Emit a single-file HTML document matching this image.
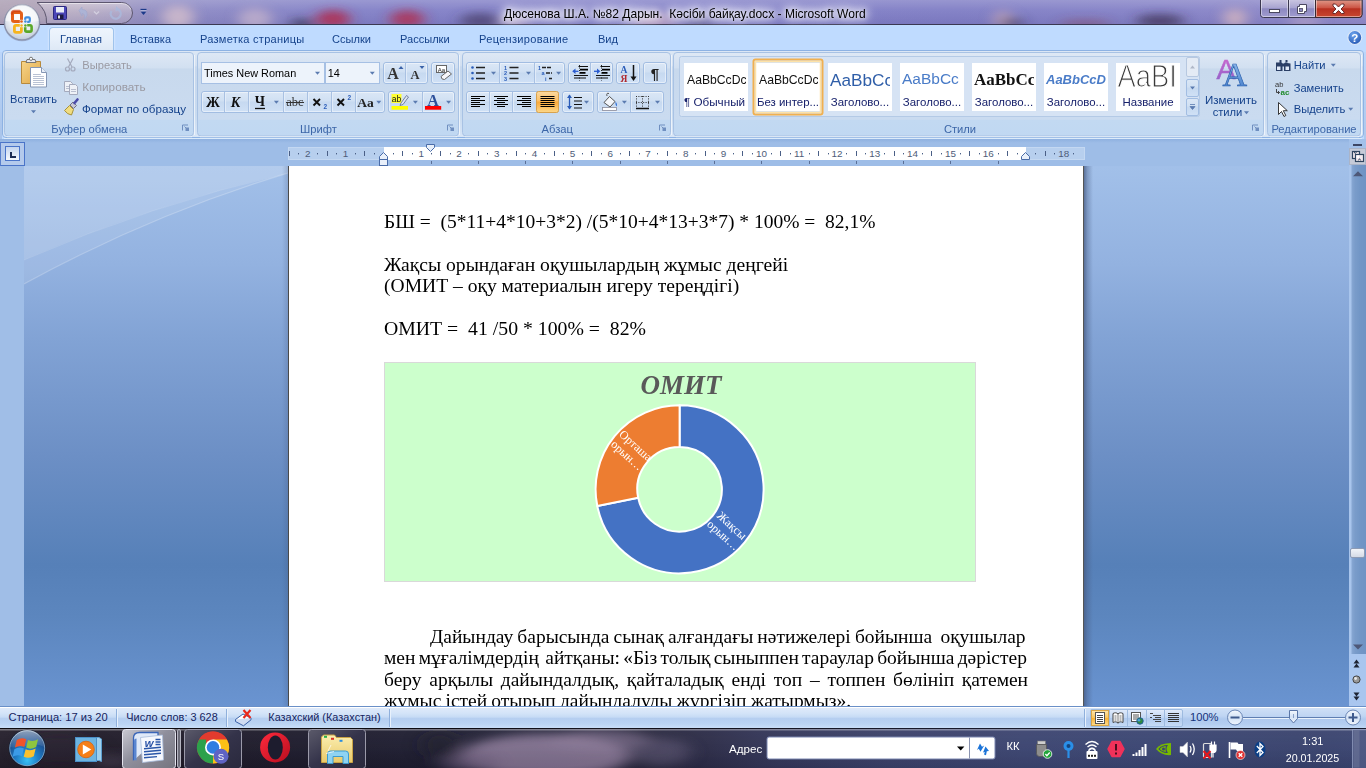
<!DOCTYPE html>
<html><head><meta charset="utf-8">
<style>
*{box-sizing:border-box;margin:0;padding:0}
html,body{width:1366px;height:768px;overflow:hidden;background:#6a93cf;font-family:"Liberation Sans",sans-serif;font-size:12px;color:#15428b}
.abs{position:absolute}
#root{position:absolute;left:0;top:0;width:1366px;height:768px;overflow:hidden}
/* title bar */
#title{left:0;top:0;width:1366px;height:25px;background:linear-gradient(90deg,#aaa0b8 0,#a098bc 6%,#8c89c4 13%,#817fc6 25%,#7f7dc6 50%,#7e7cc4 70%,#8380c6 85%,#8f89c8 100%)}
#title .shade{left:0;top:0;width:1366px;height:25px;background:linear-gradient(180deg,rgba(255,255,255,.2) 0,rgba(255,255,255,.06) 40%,rgba(40,30,80,.06) 100%)}
#titleline{left:0;top:24px;width:1366px;height:2px;background:linear-gradient(180deg,#3a3852 0,#3a3852 50%,#6e7298 50%,#6e7298 100%)}
#titletext{left:504px;top:7px;width:362px;text-align:left;color:#000;font-size:12.06px;line-height:14px;white-space:pre;text-shadow:0 0 5px #fff,0 0 8px #fff,0 0 11px #fff,0 0 14px rgba(255,255,255,.95),0 0 18px rgba(255,255,255,.8)}
/* tab row */
#tabrow{left:0;top:25px;width:1366px;height:115px;background:#bfdbff}
.tab{position:absolute;top:7px;font-size:11.05px;line-height:14px;color:#15428b;white-space:nowrap}
#tabactive{left:48.5px;top:27px;width:65px;height:24px;border:1px solid #9fc3ec;border-bottom:none;border-radius:4px 4px 0 0;background:linear-gradient(180deg,#eef5fd 0,#e6effa 55%,#dde8f5 100%);box-shadow:0 0 2px rgba(255,255,255,.9)}
/* ribbon */
#ribbon{left:2px;top:50px;width:1362px;height:89px;border:1px solid #8db2e3;border-radius:4px;background:linear-gradient(180deg,#dde8f5 0,#d3e0f1 18%,#c7d8ed 22%,#c9dbef 70%,#d5e4f5 100%)}
.grp{position:absolute;top:53px;height:84px;border:1px solid #a9c3e3;border-radius:4px;background:linear-gradient(180deg,#dfe9f5 0,#d5e2f2 19%,#c8d9ed 21%,#c9daee 78%,#c1d8f1 81%,#c1d8f1 100%);box-shadow:1px 1px 0 rgba(255,255,255,.7)}
.grplabel{position:absolute;left:0;right:0;bottom:1px;height:15px;text-align:center;color:#3e6aaa;font-size:12px;line-height:15px}
.t{position:absolute;white-space:nowrap}
</style></head><body><div id="root">

<!-- TITLE BAR -->
<div id="title" class="abs"><div class="shade abs"></div></div>
<svg class="abs" style="left:0;top:0" width="1366" height="25" viewBox="0 0 1366 25">
<defs><filter id="bl" x="-50%" y="-50%" width="200%" height="200%"><feGaussianBlur stdDeviation="7 4"/></filter></defs>
<g filter="url(#bl)">
<ellipse cx="178" cy="17" rx="16" ry="12" fill="#d0bccb" opacity=".85"/>
<ellipse cx="255" cy="19" rx="17" ry="11" fill="#c6b4cc" opacity=".75"/>
<ellipse cx="333" cy="19" rx="17" ry="9" fill="#b02c4c" opacity=".85"/>
<ellipse cx="407" cy="19" rx="17" ry="9" fill="#b02c4c" opacity=".8"/>
<ellipse cx="302" cy="24" rx="12" ry="5" fill="#2e2644" opacity=".7"/>
<ellipse cx="480" cy="21" rx="20" ry="8" fill="#463a64" opacity=".7"/>
<ellipse cx="515" cy="22" rx="14" ry="7" fill="#c8b0c8" opacity=".6"/>
<ellipse cx="655" cy="21" rx="22" ry="8" fill="#c9a8c0" opacity=".7"/>
<ellipse cx="700" cy="23" rx="14" ry="5" fill="#4a3f68" opacity=".5"/>
<ellipse cx="1003" cy="20" rx="10" ry="10" fill="#c8a8b8" opacity=".7"/>
<ellipse cx="1012" cy="23" rx="12" ry="5" fill="#3a3050" opacity=".6"/>
<ellipse cx="1085" cy="24" rx="26" ry="4" fill="#8a4058" opacity=".5"/>
<ellipse cx="1160" cy="21" rx="24" ry="7" fill="#3a3050" opacity=".7"/>
<ellipse cx="1235" cy="18" rx="12" ry="10" fill="#d8b8c0" opacity=".75"/>
<ellipse cx="1305" cy="22" rx="16" ry="6" fill="#c8b0c8" opacity=".5"/>
<ellipse cx="40" cy="8" rx="60" ry="14" fill="#b8aab8" opacity=".55"/>
</g>
</svg>
<div id="titleline" class="abs"></div>
<div id="titletext" class="abs">Дюсенова Ш.А. №82 Дарын.  Кәсіби байқау.docx - Microsoft Word</div>

<!-- TAB ROW -->
<div id="tabrow" class="abs"></div>
<div id="tabactive" class="abs"></div>
<div class="tab" style="left:60px;top:32px">Главная</div>
<div class="tab" style="left:130px;top:32px">Вставка</div>
<div class="tab" style="left:200px;top:32px;letter-spacing:.25px">Разметка страницы</div>
<div class="tab" style="left:332px;top:32px">Ссылки</div>
<div class="tab" style="left:400px;top:32px">Рассылки</div>
<div class="tab" style="left:479px;top:32px;letter-spacing:.3px">Рецензирование</div>
<div class="tab" style="left:598px;top:32px">Вид</div>

<!-- QAT / OFFICE BUTTON / WINDOW CONTROLS -->
<svg class="abs" style="left:0;top:0" width="1366" height="50" viewBox="0 0 1366 50" font-family="Liberation Sans, sans-serif">
<defs>
<radialGradient id="ob" cx=".5" cy=".35" r=".7"><stop offset="0" stop-color="#ffffff"/><stop offset=".55" stop-color="#e9edf3"/><stop offset=".85" stop-color="#c9d2df"/><stop offset="1" stop-color="#aeb9ca"/></radialGradient>
<linearGradient id="qat" x1="0" y1="0" x2="0" y2="1"><stop offset="0" stop-color="#d8d0dc" stop-opacity=".75"/><stop offset=".5" stop-color="#c0b6cc" stop-opacity=".6"/><stop offset="1" stop-color="#b0a6c4" stop-opacity=".55"/></linearGradient>
<linearGradient id="wc" x1="0" y1="0" x2="0" y2="1"><stop offset="0" stop-color="#c8c4e0"/><stop offset=".45" stop-color="#a8a4d0"/><stop offset=".5" stop-color="#8c88c0"/><stop offset="1" stop-color="#a29ed0"/></linearGradient>
<linearGradient id="wx" x1="0" y1="0" x2="0" y2="1"><stop offset="0" stop-color="#e09888"/><stop offset=".45" stop-color="#cc5444"/><stop offset=".5" stop-color="#b83020"/><stop offset="1" stop-color="#c84830"/></linearGradient>
<radialGradient id="hp" cx=".4" cy=".3" r=".8"><stop offset="0" stop-color="#6fa6ee"/><stop offset="1" stop-color="#1c4fae"/></radialGradient>
</defs>
<path d="M37,2.500H121.500a11,10.500 0 0 1 0,21H46.500A24.500,24.500 0 0 0 37,2.500z" fill="url(#qat)" stroke="#5c566e" stroke-width="1"/>
<path d="M40,3.500H121.500a10,9.500 0 0 1 9.500,6" fill="none" stroke="#fff" stroke-opacity=".5"/>
<!-- save -->
<rect x="53.500" y="6.500" width="13" height="13" rx="1" fill="#4b46b8" stroke="#2c2880" stroke-width="1"/><rect x="56" y="7" width="8" height="5.500" fill="#e8ecf8"/><rect x="57" y="14.500" width="6.500" height="4.500" fill="#1c1a40"/><rect x="58" y="15.500" width="2" height="3" fill="#d8d8e8"/>
<!-- undo (disabled) -->
<path d="M79,10.500l3,-3.500v2.500q6,0 5,6q-0.500,2.500 -3,3.500q2,-5 -2,-5.500v2.500z" fill="#aab4d8" stroke="#9aa4cc" stroke-width=".6" opacity=".85"/>
<path d="M94,11.500l2.500,2.500l2.500,-2.500" fill="none" stroke="#d4d0e0" stroke-width="1.200"/>
<!-- redo (disabled) -->
<path d="M118.500,9.500a5,5 0 1 1 -7,1.500" fill="none" stroke="#aab8dc" stroke-width="2.200" opacity=".85"/><path d="M116,6l4,3.500l-4.500,2z" fill="#aab8dc" opacity=".85"/>
<!-- customize -->
<path d="M140.500,9.500h6" stroke="#1c3a8a" stroke-width="1.300"/><path d="M140.500,11.500h6l-3,3.500z" fill="#1c3a8a"/><path d="M140.500,10.800h6" stroke="#e8ecf8" stroke-width=".6"/>
<!-- office button -->
<circle cx="22" cy="23" r="18.300" fill="#6a6a88" opacity=".4"/>
<circle cx="22" cy="22.400" r="17.500" fill="url(#ob)" stroke="#8c93ab" stroke-width="1.200"/>
<path d="M5.500,21a16.500,16.500 0 0 1 33,0q-16.500,3.500 -33,0z" fill="#fff" opacity=".5"/>
<g fill="none" stroke-linejoin="round">
<rect x="12.500" y="12.500" width="9" height="9" rx="1.800" stroke="#e4601a" stroke-width="3"/>
<rect x="25.200" y="17.300" width="4.600" height="4.600" rx="1.200" stroke="#3f8de0" stroke-width="2.200"/>
<rect x="14.400" y="25.400" width="7" height="7" rx="1.600" stroke="#f6b41e" stroke-width="2.800"/>
<rect x="25.200" y="25.200" width="6.400" height="6.400" rx="1.600" stroke="#5aa828" stroke-width="2.600"/>
</g>
<path d="M12,13.500q0,-2.500 2.500,-2.500h5" fill="none" stroke="#d03c0c" stroke-width="2.500" stroke-linecap="round" opacity=".7"/>
<rect x="19.800" y="19.800" width="7.400" height="7.400" fill="#eef0f5"/>
<circle cx="21.500" cy="21.500" r="1.350" fill="#e4601a"/><circle cx="25.400" cy="21.500" r="1.250" fill="#3f8de0"/><circle cx="21.500" cy="25.400" r="1.250" fill="#f6b41e"/><circle cx="25.400" cy="25.400" r="1.250" fill="#5aa828"/>
<!-- window controls -->
<path d="M1260.500,0v14.500q0,3 3,3h95.500q3,0 3,-3V0" fill="url(#wc)" stroke="#3a3850" stroke-width="1"/>
<path d="M1315.500,0v17.500h43.500q3,0 3,-3V0z" fill="url(#wx)" stroke="#3a2830" stroke-width="1"/>
<path d="M1288.500,0v17.500" stroke="#3a3850" stroke-width="1"/>
<path d="M1261.500,0v14.500q0,2 2,2h24v-16.500M1289.500,0v16.500h25v-16.500M1316.500,0v16.500h42.500q2,0 2,-2V0" fill="none" stroke="#fff" stroke-opacity=".45"/>
<rect x="1269.500" y="9.500" width="10" height="3" fill="#fff" stroke="#4a4860" stroke-width="1"/>
<path d="M1299.500,4.500h7v7h-2v2h-7v-7h2z" fill="#fff" stroke="#4a4860" stroke-width="1"/><rect x="1299.500" y="8.500" width="3" height="3" fill="#8a86bc" stroke="#4a4860" stroke-width=".8"/>
<path d="M1333,4l2.500,0l3,3l3,-3l2.500,0l0,2l-3,3l3,3l0,1.500l-2.500,0l-3,-3l-3,3l-2.500,0l0,-1.500l3,-3l-3,-3z" fill="#fff" stroke="#5a2020" stroke-width=".9"/>
<!-- help -->
<circle cx="1354.800" cy="37.500" r="7" fill="url(#hp)" stroke="#dfe9f8" stroke-width="1.200"/>
<text x="1354.800" y="41.800" font-size="11.500" font-weight="bold" fill="#fff" text-anchor="middle">?</text>
</svg>

<div class="abs" style="left:0;top:52px;width:2px;height:87px;background:linear-gradient(180deg,#bcd6fa,#a9c4ea)"></div><div class="abs" style="left:1364px;top:52px;width:2px;height:87px;background:linear-gradient(180deg,#bcd6fa,#aec8ec)"></div>
<!-- RIBBON-START -->
<svg class="abs" style="left:0;top:50px" width="1366" height="90" viewBox="0 50 1366 90" font-family="Liberation Sans, sans-serif">
<defs>
<linearGradient id="rb" x1="0" y1="0" x2="0" y2="1"><stop offset="0" stop-color="#dce7f5"/><stop offset=".17" stop-color="#d3e0f1"/><stop offset=".19" stop-color="#c7d8ed"/><stop offset=".75" stop-color="#c9dbf0"/><stop offset="1" stop-color="#d8e6f7"/></linearGradient>
<linearGradient id="gp" x1="0" y1="0" x2="0" y2="1"><stop offset="0" stop-color="#dee8f5"/><stop offset=".18" stop-color="#d2e0f1"/><stop offset=".2" stop-color="#c8d9ed"/><stop offset=".8" stop-color="#cadbf0"/><stop offset=".81" stop-color="#c2d9f2"/><stop offset="1" stop-color="#c0d8f2"/></linearGradient>
<linearGradient id="bg" x1="0" y1="0" x2="0" y2="1"><stop offset="0" stop-color="#dbe7f6"/><stop offset=".45" stop-color="#d0e0f3"/><stop offset=".5" stop-color="#c6d9f0"/><stop offset="1" stop-color="#d0e1f6"/></linearGradient>
<linearGradient id="or" x1="0" y1="0" x2="0" y2="1"><stop offset="0" stop-color="#fbd9a0"/><stop offset=".45" stop-color="#fdc066"/><stop offset=".5" stop-color="#fba93a"/><stop offset="1" stop-color="#fdd88a"/></linearGradient>
<linearGradient id="clip" x1="0" y1="0" x2="1" y2="1"><stop offset="0" stop-color="#f7d488"/><stop offset="1" stop-color="#e0a848"/></linearGradient>
<linearGradient id="aa1" x1="0" y1="0" x2="0" y2="1"><stop offset="0" stop-color="#d56bd0"/><stop offset="1" stop-color="#8a5fc8"/></linearGradient>
<linearGradient id="aa2" x1="0" y1="0" x2="0" y2="1"><stop offset="0" stop-color="#9cc4f0"/><stop offset="1" stop-color="#3f79c8"/></linearGradient>
</defs>
<rect x="2.5" y="50.5" width="1361" height="87" rx="3.5" fill="url(#rb)" stroke="#8db2e3"/>
<path d="M4,138.500H1362" stroke="#dcecfb" stroke-opacity=".95"/>
<rect x="4.5" y="52.5" width="189" height="83.5" rx="3.5" fill="url(#gp)" stroke="#a8c2e4"/>
<path d="M194.5,55V135" stroke="#fff" stroke-opacity=".6"/><path d="M7,136.800H192" stroke="#fff" stroke-opacity=".6"/>
<text x="89.3" y="133" font-size="11.2" fill="#3c66a8" text-anchor="middle" >Буфер обмена</text>
<path d="M182.5,130.5v-5.500h5.5" fill="none" stroke="#6f8fc0"/><path d="M185.5,127.5h3.500v3.500h-3.500z" fill="#6f8fc0"/><path d="M184.5,126.5l2,2" stroke="#6f8fc0"/>
<rect x="197.5" y="52.5" width="261" height="83.5" rx="3.5" fill="url(#gp)" stroke="#a8c2e4"/>
<path d="M459.5,55V135" stroke="#fff" stroke-opacity=".6"/><path d="M200,136.800H457" stroke="#fff" stroke-opacity=".6"/>
<text x="318.5" y="133" font-size="11.2" fill="#3c66a8" text-anchor="middle" >Шрифт</text>
<path d="M447.5,130.5v-5.500h5.5" fill="none" stroke="#6f8fc0"/><path d="M450.5,127.5h3.500v3.500h-3.500z" fill="#6f8fc0"/><path d="M449.5,126.5l2,2" stroke="#6f8fc0"/>
<rect x="462.5" y="52.5" width="208" height="83.5" rx="3.5" fill="url(#gp)" stroke="#a8c2e4"/>
<path d="M671.5,55V135" stroke="#fff" stroke-opacity=".6"/><path d="M465,136.800H669" stroke="#fff" stroke-opacity=".6"/>
<text x="557.3" y="133" font-size="11.2" fill="#3c66a8" text-anchor="middle" >Абзац</text>
<path d="M659.5,130.5v-5.500h5.5" fill="none" stroke="#6f8fc0"/><path d="M662.5,127.5h3.500v3.500h-3.500z" fill="#6f8fc0"/><path d="M661.5,126.5l2,2" stroke="#6f8fc0"/>
<rect x="673.5" y="52.5" width="590" height="83.5" rx="3.5" fill="url(#gp)" stroke="#a8c2e4"/>
<path d="M1264.5,55V135" stroke="#fff" stroke-opacity=".6"/><path d="M676,136.800H1262" stroke="#fff" stroke-opacity=".6"/>
<text x="960" y="133" font-size="11.2" fill="#3c66a8" text-anchor="middle" >Стили</text>
<path d="M1252.5,130.5v-5.500h5.5" fill="none" stroke="#6f8fc0"/><path d="M1255.5,127.5h3.500v3.500h-3.500z" fill="#6f8fc0"/><path d="M1254.5,126.5l2,2" stroke="#6f8fc0"/>
<rect x="1267.5" y="52.5" width="93" height="83.5" rx="3.5" fill="url(#gp)" stroke="#a8c2e4"/>
<path d="M1361.5,55V135" stroke="#fff" stroke-opacity=".6"/><path d="M1270,136.800H1359" stroke="#fff" stroke-opacity=".6"/>
<text x="1314" y="133" font-size="11.2" fill="#3c66a8" text-anchor="middle" >Редактирование</text>
<path d="M21.5,61.500h19v22h-19z" fill="url(#clip)" stroke="#b88a3c"/>
<path d="M27,59.500h8l1,3h-10z" fill="#e8e8ee" stroke="#777"/><circle cx="31" cy="58.8" r="1.6" fill="#fff" stroke="#777"/>
<path d="M30.5,67.500h11l5,5v14.500h-16z" fill="#fff" stroke="#8596b4"/><path d="M41.5,67.500v5h5" fill="#e8eef8" stroke="#8596b4"/>
<path d="M33,74.500h8M33,76.500h11M33,78.500h11M33,80.500h11M33,82.500h11M33,84.500h11" stroke="#b9c2d4"/>
<text x="33.5" y="102.8" font-size="11.05" fill="#15428b" text-anchor="middle" >Вставить</text>
<path d="M31,110.3h5l-2.5,3z" fill="#5b7bb0"/>
<g stroke="#a4aabd" fill="none" stroke-width="1.2"><path d="M67.5,58.500l4.5,8.500M73,58.500l-4.5,8.5"/><circle cx="67.5" cy="69" r="2"/><circle cx="73" cy="69" r="2"/></g>
<text x="82.3" y="69" font-size="11.15" fill="#9a9aa3" text-anchor="start" >Вырезать</text>
<g stroke="#a4aabd" fill="#eef1f7"><path d="M64.5,81.500h6l2,2v8h-8z"/><path d="M69.5,84.500h6l2,2v8h-8z"/></g><path d="M71,89.500h5M71,91.500h5M66,86.500h3M66,88.500h3" stroke="#b9bfd0"/>
<text x="82.3" y="90.8" font-size="11.75" fill="#9a9aa3" text-anchor="start" >Копировать</text>
<path d="M64.5,110.500l5,-5l4,4l-2,5.500q-4,-0.5 -7,-4.500z" fill="#f0dc80" stroke="#a8923a"/><path d="M70,105l3,-3l3.5,3.500l-3,3z" fill="#c9c9d6" stroke="#70708a"/><path d="M74.5,103l3,-3.5" stroke="#4a4aa8" stroke-width="2.6" stroke-linecap="round"/>
<text x="82" y="113" font-size="11.6" fill="#15428b" text-anchor="start" >Формат по образцу</text>
<rect x="201.5" y="62.5" width="123" height="21" fill="#edf3fb" stroke="#a6c0e4"/>
<rect x="325.5" y="62.5" width="54" height="21" fill="#edf3fb" stroke="#a6c0e4"/>
<text x="204" y="77" font-size="10.9" fill="#000" text-anchor="start" >Times New Roman</text>
<path d="M315,71.8h5l-2.5,3z" fill="#5b7bb0"/>
<text x="327.8" y="77" font-size="10.9" fill="#000" text-anchor="start" >14</text>
<path d="M369.8,71.8h5l-2.5,3z" fill="#5b7bb0"/>
<rect x="383.5" y="62.5" width="44" height="21" rx="2.5" fill="url(#bg)" stroke="#a2bde2"/>
<rect x="384.5" y="63.5" width="42" height="19" rx="1.5" fill="none" stroke="#fff" stroke-opacity=".45"/>
<path d="M405.5,63V83" stroke="#a9c1e2"/><path d="M406.5,63V83" stroke="#e6effa" stroke-opacity=".8"/>
<text x="393" y="79" font-family="Liberation Serif, serif" font-weight="bold" font-size="16" fill="#333" text-anchor="middle">A</text><path d="M398.5,69h5l-2.5,-3z" fill="#3b62a8"/>
<text x="415" y="79" font-family="Liberation Serif, serif" font-weight="bold" font-size="12.5" fill="#333" text-anchor="middle">A</text><path d="M419.5,66h5l-2.5,3z" fill="#3b62a8"/>
<rect x="431.5" y="62.5" width="23" height="21" rx="2.5" fill="url(#bg)" stroke="#a2bde2"/>
<rect x="432.5" y="63.5" width="21" height="19" rx="1.5" fill="none" stroke="#fff" stroke-opacity=".45"/>
<rect x="436.5" y="65.5" width="10" height="7" fill="#fff" stroke="#666"/><text x="441.5" y="71.5" font-size="6" fill="#222" text-anchor="middle">Aa</text><path d="M441,76.500l7,-5.500l3.5,3l-7,5.500q-3,0.5 -3.5,-3z" fill="#f6f6fa" stroke="#666"/>
<rect x="201.5" y="91.5" width="183" height="21" rx="2.5" fill="url(#bg)" stroke="#a2bde2"/>
<rect x="202.5" y="92.5" width="181" height="19" rx="1.5" fill="none" stroke="#fff" stroke-opacity=".45"/>
<path d="M224.5,92V112" stroke="#a9c1e2"/><path d="M225.5,92V112" stroke="#e6effa" stroke-opacity=".8"/>
<path d="M248.5,92V112" stroke="#a9c1e2"/><path d="M249.5,92V112" stroke="#e6effa" stroke-opacity=".8"/>
<path d="M283.5,92V112" stroke="#a9c1e2"/><path d="M284.5,92V112" stroke="#e6effa" stroke-opacity=".8"/>
<path d="M307.5,92V112" stroke="#a9c1e2"/><path d="M308.5,92V112" stroke="#e6effa" stroke-opacity=".8"/>
<path d="M331.5,92V112" stroke="#a9c1e2"/><path d="M332.5,92V112" stroke="#e6effa" stroke-opacity=".8"/>
<path d="M355.5,92V112" stroke="#a9c1e2"/><path d="M356.5,92V112" stroke="#e6effa" stroke-opacity=".8"/>
<text x="213" y="107" font-family="Liberation Serif, serif" font-weight="bold" font-size="14" fill="#111" text-anchor="middle">Ж</text>
<text x="235.5" y="107" font-family="Liberation Serif, serif" font-weight="bold" font-style="italic" font-size="14" fill="#111" text-anchor="middle">К</text>
<text x="260" y="106" font-family="Liberation Serif, serif" font-weight="bold" font-size="14" fill="#111" text-anchor="middle">Ч</text><path d="M255,108.500h10" stroke="#111" stroke-width="1.3"/>
<path d="M273.9,100.8h5l-2.5,3z" fill="#5b7bb0"/>
<text x="295" y="106" font-family="Liberation Serif, serif" font-size="12.5" fill="#333" text-anchor="middle">abc</text><path d="M286,102.500h18" stroke="#333"/>
<path d="M313.5,99l6.5,6.500M320,99l-6.5,6.5" stroke="#111" stroke-width="1.9"/><text x="323.5" y="109" font-size="6.5" font-weight="bold" fill="#2a5cb8">2</text>
<path d="M337.5,99l6.5,6.500M344,99l-6.5,6.5" stroke="#111" stroke-width="1.9"/><text x="347.5" y="100" font-size="6.5" font-weight="bold" fill="#2a5cb8">2</text>
<text x="365.5" y="107" font-family="Liberation Serif, serif" font-weight="bold" font-size="13.5" fill="#222" text-anchor="middle">Aa</text>
<path d="M376.3,100.8h5l-2.5,3z" fill="#5b7bb0"/>
<rect x="388.5" y="91.5" width="66" height="21" rx="2.5" fill="url(#bg)" stroke="#a2bde2"/>
<rect x="389.5" y="92.5" width="64" height="19" rx="1.5" fill="none" stroke="#fff" stroke-opacity=".45"/>
<path d="M422.5,92V112" stroke="#a9c1e2"/><path d="M423.5,92V112" stroke="#e6effa" stroke-opacity=".8"/>
<rect x="391.5" y="94" width="10" height="9" fill="#ffff33"/><text x="396.5" y="102" font-size="8.5" fill="#111" text-anchor="middle">ab</text><path d="M401,103l5.5,-7.500l2,1.500l-5.5,7.500l-3,1z" fill="#dfe6f4" stroke="#5a6a8a" stroke-width=".8"/>
<rect x="391.5" y="106" width="16.5" height="3.7" fill="#ffff00"/>
<path d="M412.9,100.8h5l-2.5,3z" fill="#5b7bb0"/>
<text x="433" y="105.5" font-family="Liberation Serif, serif" font-weight="bold" font-size="16" fill="#2c4f9a" text-anchor="middle">A</text><rect x="425" y="106" width="16.2" height="3.7" fill="#ff0000"/>
<path d="M446.1,100.8h5l-2.5,3z" fill="#5b7bb0"/>
<rect x="466.5" y="62.5" width="98" height="21" rx="2.5" fill="url(#bg)" stroke="#a2bde2"/>
<rect x="467.5" y="63.5" width="96" height="19" rx="1.5" fill="none" stroke="#fff" stroke-opacity=".45"/>
<path d="M499.5,63V83" stroke="#a9c1e2"/><path d="M500.5,63V83" stroke="#e6effa" stroke-opacity=".8"/>
<path d="M534.5,63V83" stroke="#a9c1e2"/><path d="M535.5,63V83" stroke="#e6effa" stroke-opacity=".8"/>
<g fill="#2a5cb8"><circle cx="472.5" cy="67.5" r="1.3"/><circle cx="472.5" cy="73" r="1.3"/><circle cx="472.5" cy="78.5" r="1.3"/></g><path d="M476,67.500h9M476,73h9M476,78.500h9" stroke="#222" stroke-width="1.3"/>
<path d="M491,71.8h5l-2.5,3z" fill="#5b7bb0"/>
<g font-size="5.5" font-weight="bold" fill="#2a5cb8"><text x="504" y="69.5">1</text><text x="504" y="75">2</text><text x="504" y="80.5">3</text></g><path d="M509.5,67.500h9M509.5,73h9M509.5,78.500h9" stroke="#222" stroke-width="1.3"/>
<path d="M526,71.8h5l-2.5,3z" fill="#5b7bb0"/>
<g font-size="5.5" font-weight="bold" fill="#2a5cb8"><text x="538" y="69.5">1</text><text x="541.5" y="75">a</text><text x="545" y="80.5">i</text></g><path d="M542,67.500h10M546,73h6M549,78.500h3" stroke="#222" stroke-width="1.3" stroke-dasharray="4 1"/>
<path d="M556.1,71.8h5l-2.5,3z" fill="#5b7bb0"/>
<rect x="568.5" y="62.5" width="44" height="21" rx="2.5" fill="url(#bg)" stroke="#a2bde2"/>
<rect x="569.5" y="63.5" width="42" height="19" rx="1.5" fill="none" stroke="#fff" stroke-opacity=".45"/>
<path d="M590.5,63V83" stroke="#a9c1e2"/><path d="M591.5,63V83" stroke="#e6effa" stroke-opacity=".8"/>
<path d="M578.5,66.500h9.500M574,75.500h14M574,78h12" stroke="#111" stroke-width="1"/>
<path d="M580,69.700h8M580,72.800h5.5" stroke="#000" stroke-width="1.8"/>
<path d="M579.5,65v15.5" stroke="#222" stroke-width="1" stroke-dasharray="1 1.5"/>
<path d="M573.5,71.300h5" stroke="#2a5cd0" stroke-width="1.3"/><path d="M575.5,68.500l-3.3,2.800l3.3,2.800z" fill="#2a5cd0"/>
<path d="M600.5,66.500h9.500M596,75.500h14M596,78h12" stroke="#111" stroke-width="1"/>
<path d="M602,69.700h8M602,72.800h5.5" stroke="#000" stroke-width="1.8"/>
<path d="M601.5,65v15.5" stroke="#222" stroke-width="1" stroke-dasharray="1 1.5"/>
<path d="M594,71.300h4.5" stroke="#2a5cd0" stroke-width="1.3"/><path d="M597,68.500l3.3,2.800l-3.3,2.800z" fill="#2a5cd0"/>
<rect x="616.5" y="62.5" width="23" height="21" rx="2.5" fill="url(#bg)" stroke="#a2bde2"/>
<rect x="617.5" y="63.5" width="21" height="19" rx="1.5" fill="none" stroke="#fff" stroke-opacity=".45"/>
<text x="624" y="72.5" font-family="Liberation Serif, serif" font-weight="bold" font-size="9.5" fill="#2a5cb8" text-anchor="middle">А</text><text x="624" y="81.5" font-family="Liberation Serif, serif" font-weight="bold" font-size="9.5" fill="#b0282e" text-anchor="middle">Я</text><path d="M633.5,65v13" stroke="#111" stroke-width="1.5"/><path d="M630.5,76.500h6l-3,4.500z" fill="#111"/>
<rect x="643.5" y="62.5" width="23" height="21" rx="2.5" fill="url(#bg)" stroke="#a2bde2"/>
<rect x="644.5" y="63.5" width="21" height="19" rx="1.5" fill="none" stroke="#fff" stroke-opacity=".45"/>
<text x="655" y="79" font-size="15" font-weight="bold" fill="#222" text-anchor="middle">¶</text>
<rect x="466.5" y="91.5" width="92" height="21" rx="2.5" fill="url(#bg)" stroke="#a2bde2"/>
<rect x="467.5" y="92.5" width="90" height="19" rx="1.5" fill="none" stroke="#fff" stroke-opacity=".45"/>
<path d="M489.5,92V112" stroke="#a9c1e2"/><path d="M490.5,92V112" stroke="#e6effa" stroke-opacity=".8"/>
<path d="M512.5,92V112" stroke="#a9c1e2"/><path d="M513.5,92V112" stroke="#e6effa" stroke-opacity=".8"/>
<rect x="536.5" y="91.5" width="22" height="21" rx="2" fill="url(#or)" stroke="#d8a24e"/>
<path d="M471,96.5h14M471,98.5h9M471,100.5h14M471,102.5h9M471,104.5h14M471,106.5h9" stroke="#000" stroke-width="1.15"/>
<path d="M494,96.5h14M497,98.5h8M494,100.5h14M497,102.5h8M494,104.5h14M497,106.5h8" stroke="#000" stroke-width="1.15"/>
<path d="M517,96.5h14M522,98.5h9M517,100.5h14M522,102.5h9M517,104.5h14M522,106.5h9" stroke="#000" stroke-width="1.15"/>
<path d="M540.5,96.5h14M540.5,98.5h14M540.5,100.5h14M540.5,102.5h14M540.5,104.5h14M540.5,106.5h14" stroke="#000" stroke-width="1.15"/>
<rect x="562.5" y="91.5" width="31" height="21" rx="2.5" fill="url(#bg)" stroke="#a2bde2"/>
<rect x="563.5" y="92.5" width="29" height="19" rx="1.5" fill="none" stroke="#fff" stroke-opacity=".45"/>
<path d="M569.5,95v14" stroke="#2a5cb8" stroke-width="1.3"/><path d="M567,98l2.5,-3.500l2.5,3.500zM567,106l2.5,3.500l2.5,-3.500z" fill="#2a5cb8"/><path d="M574,97.500h8M574,101h8M574,104.500h8M574,108h8" stroke="#111" stroke-width="1.1"/>
<path d="M584,100.8h5l-2.5,3z" fill="#5b7bb0"/>
<rect x="597.5" y="91.5" width="66" height="21" rx="2.5" fill="url(#bg)" stroke="#a2bde2"/>
<rect x="598.5" y="92.5" width="64" height="19" rx="1.5" fill="none" stroke="#fff" stroke-opacity=".45"/>
<path d="M630.5,92V112" stroke="#a9c1e2"/><path d="M631.5,92V112" stroke="#e6effa" stroke-opacity=".8"/>
<path d="M604,102.500l5.5,-6l5.5,5l-5,5.500z" fill="#f4f7fc" stroke="#555"/><path d="M607,96q-1,-3.5 2,-2.5" fill="none" stroke="#555"/><path d="M615.5,101.500q2,2 1.5,5q-2,-1 -1.5,-5z" fill="#3b78d8"/><rect x="602.5" y="107.5" width="14" height="3" fill="#fff" stroke="#8a8a9a" stroke-width=".8"/>
<path d="M621.9,100.8h5l-2.5,3z" fill="#5b7bb0"/>
<path d="M636,96.500h13M636,102.500h13M636.5,96v12M642.5,96v12M648.5,96v12" fill="none" stroke="#333" stroke-width="1" stroke-dasharray="1 1.4"/><path d="M636,108.500h13" stroke="#111" stroke-width="1.5"/>
<path d="M655,100.8h5l-2.5,3z" fill="#5b7bb0"/>
<rect x="679.5" y="56.5" width="520" height="60" rx="2" fill="#d6e3f4" stroke="#b4cae6"/>
<rect x="684" y="63" width="64" height="48" fill="#fff"/>
<text x="714.5" y="106" font-size="11.7" fill="#17216b" text-anchor="middle" >¶ Обычный</text>
<rect x="756" y="63" width="64" height="48" fill="#fff"/>
<rect x="753.5" y="59.5" width="69" height="55" rx="2" fill="none" stroke="#f0b050" stroke-width="2"/><rect x="755.5" y="61.5" width="65" height="51" fill="none" stroke="#fde2a8" stroke-width="1.5"/>
<text x="788" y="106" font-size="11.45" fill="#17216b" text-anchor="middle" >Без интер...</text>
<rect x="828" y="63" width="64" height="48" fill="#fff"/>
<text x="860" y="106" font-size="11.45" fill="#17216b" text-anchor="middle" >Заголово...</text>
<rect x="900" y="63" width="64" height="48" fill="#fff"/>
<text x="932" y="106" font-size="11.45" fill="#17216b" text-anchor="middle" >Заголово...</text>
<rect x="972" y="63" width="64" height="48" fill="#fff"/>
<text x="1004" y="106" font-size="11.45" fill="#17216b" text-anchor="middle" >Заголово...</text>
<rect x="1044" y="63" width="64" height="48" fill="#fff"/>
<text x="1076" y="106" font-size="11.45" fill="#17216b" text-anchor="middle" >Заголово...</text>
<rect x="1116" y="63" width="64" height="48" fill="#fff"/>
<text x="1148" y="106" font-size="11.45" fill="#17216b" text-anchor="middle" >Название</text>
<svg x="685" y="63" width="61" height="30" viewBox="685 63 61 30"><text x="687" y="84" font-size="12.2" fill="#111">AaBbCcDc</text></svg>
<svg x="757" y="63" width="61" height="30" viewBox="757 63 61 30"><text x="759" y="84" font-size="12.2" fill="#111">AaBbCcDc</text></svg>
<svg x="829" y="63" width="61" height="30" viewBox="829 63 61 30"><text x="830" y="86" font-size="17.2" fill="#2f5ea8">AaBbCc</text></svg>
<svg x="901" y="63" width="61" height="30" viewBox="901 63 61 30"><text x="902" y="84" font-size="15.5" fill="#4a7cc8">AaBbCc</text></svg>
<svg x="973" y="63" width="61" height="30" viewBox="973 63 61 30"><text x="974" y="85" font-family="Liberation Serif, serif" font-weight="bold" font-size="17" fill="#111">AaBbCc</text></svg>
<svg x="1045" y="63" width="61" height="30" viewBox="1045 63 61 30"><text x="1046" y="84" font-size="13" font-weight="bold" font-style="italic" fill="#4a7cc8">AaBbCcD</text></svg>
<svg x="1117" y="63" width="61" height="30" viewBox="1117 63 61 30"><text transform="translate(1117.5 0) scale(.9 1)" x="0" y="87.3" font-size="30.5" fill="#3a3a3a" stroke="#fff" stroke-width="1.1">AaBI</text></svg>
<rect x="1124" y="63" width="50" height="26" fill="#fff" fill-opacity=".0"/>
<rect x="1186.5" y="57.5" width="12" height="19" rx="1.5" fill="#e4ebf5" stroke="#b7c8e0"/><path d="M1190,68.500h5l-2.5,-3z" fill="#b0b8c8"/>
<rect x="1186.5" y="79.5" width="12" height="17" rx="1.5" fill="url(#bg)" stroke="#a2bde2"/><path d="M1190,86.500h5l-2.5,3z" fill="#5b7bb0"/>
<rect x="1186.5" y="98.5" width="12" height="17" rx="1.5" fill="url(#bg)" stroke="#a2bde2"/><path d="M1190,104.500h5M1190,106.500h5l-2.5,3z" fill="#5b7bb0" stroke="#5b7bb0" stroke-width=".8"/>
<text x="1226" y="79" font-size="28.5" fill="url(#aa1)" stroke="url(#aa1)" stroke-width=".5" text-anchor="middle">A</text><text x="1234.7" y="86" font-family="Liberation Serif, serif" font-size="34" fill="url(#aa2)" stroke="#2f64b0" stroke-width=".7" text-anchor="middle">A</text>
<text x="1231" y="103.5" font-size="11.5" fill="#15428b" text-anchor="middle" >Изменить</text>
<text x="1227.5" y="116" font-size="11.2" fill="#15428b" text-anchor="middle" >стили</text>
<path d="M1244,111.3h5l-2.5,3z" fill="#5b7bb0"/>
<g fill="#2b3f66"><path d="M1276,62.500h3.500v-2.500h2v2.500l1,1v7.500h-6.500zM1284,62.500h3.500v-2.500h-2v2.500l-1.5,1v7.500h6.500l0,-7.500z"/><rect x="1280.5" y="63.5" width="4" height="3"/></g><rect x="1277" y="66.5" width="3.5" height="3.5" fill="#dfe8f6"/><rect x="1285.5" y="66.5" width="3.5" height="3.5" fill="#dfe8f6"/>
<text x="1293.7" y="69" font-size="11.2" fill="#15428b" text-anchor="start" >Найти</text>
<path d="M1330.8,63.8h5l-2.5,3z" fill="#5b7bb0"/>
<text x="1275" y="87" font-size="7.5" fill="#333">ab</text><text x="1280.5" y="94.5" font-size="8" font-weight="bold" fill="#1f8a2c">ac</text><path d="M1276.5,89v3.500h3M1278,91l1.5,1.500l-1.5,1.5" fill="none" stroke="#333" stroke-width=".9"/>
<text x="1293.7" y="91.5" font-size="11.15" fill="#15428b" text-anchor="start" >Заменить</text>
<path d="M1278.5,102.500v12l3,-3l2.5,5l1.8,-1l-2.5,-4.800h4z" fill="#fff" stroke="#222" stroke-width=".9"/>
<text x="1293.7" y="113" font-size="11.2" fill="#15428b" text-anchor="start" >Выделить</text>
<path d="M1348.2,107.8h5l-2.5,3z" fill="#5b7bb0"/>
</svg>
<!-- RIBBON-END -->

<!-- DOC AREA -->
<div class="abs" id="docbg" style="left:0;top:139px;width:1366px;height:568px;background:linear-gradient(180deg,#a1bfe9 0,#a1bfe9 27px,#a2c0e9 28px,#93b2e0 22%,#82a3d5 35%,#6c8fc5 56%,#5680b8 75%,#5c86be 84%,#6a94d1 100%)"></div>
<div class="abs" style="left:0;top:139px;width:1366px;height:27px;background:#9ebde7"></div>
<div class="abs" style="left:0;top:139px;width:1366px;height:4px;background:linear-gradient(180deg,#8fb1e0,#9ebde7)"></div>
<div class="abs" style="left:0;top:166px;width:24px;height:541px;background:#a0bee7"></div>
<svg class="abs" style="left:24px;top:166px" width="264" height="125" viewBox="24 166 264 125"><path d="M24,166H288V173Q150,205 24,260Z" fill="#fff" fill-opacity=".2"/><path d="M288,173Q150,205 24,260V284Q150,215 288,173Z" fill="#fff" fill-opacity=".1"/><path d="M288,173Q150,215 24,284" fill="none" stroke="#fff" stroke-opacity=".22" stroke-width="1.2"/><path d="M288,173Q150,205 24,260" fill="none" stroke="#fff" stroke-opacity=".12" stroke-width="1"/></svg>
<div class="abs" style="left:282px;top:166px;width:6px;height:541px;background:linear-gradient(90deg,rgba(60,80,120,0),rgba(60,80,120,.22))"></div>
<div class="abs" style="left:1084px;top:166px;width:9px;height:541px;background:linear-gradient(90deg,rgba(70,90,130,.75),rgba(70,90,130,.35) 40%,rgba(70,90,130,0))"></div>
<div class="abs" id="page" style="left:288px;top:166px;width:796px;height:545px;background:#fff;border-left:1px solid #4a4a4a;border-right:1px solid #555"></div>

<!-- RULER -->
<svg class="abs" style="left:0;top:139px" width="1366" height="28" viewBox="0 139 1366 28">
<rect x="288" y="147" width="797" height="13" fill="#b7cfee"/>
<rect x="288.5" y="147.5" width="796" height="12" fill="none" stroke="#c4d8f2" stroke-width="1"/>
<rect x="384" y="147" width="642" height="13" fill="#fff"/>
<path stroke="#4a5f86" stroke-width="1" d="M289.5,151v5M327.5,151v5M364.5,151v5M402.5,151v5M440.5,151v5M478.5,151v5M516.5,151v5M554.5,151v5M591.5,151v5M629.5,151v5M667.5,151v5M705.5,151v5M742.5,151v5M780.5,151v5M818.5,151v5M856.5,151v5M894.5,151v5M931.5,151v5M969.5,151v5M1007.5,151v5M1045.5,151v5"/>
<path stroke="#4a5f86" stroke-width="1" d="M298.5,153v1.4M317.5,153v1.4M336.5,153v1.4M355.5,153v1.4M374.5,153v1.4M393.5,153v1.4M412.5,153v1.4M431.5,153v1.4M450.5,153v1.4M468.5,153v1.4M487.5,153v1.4M506.5,153v1.4M525.5,153v1.4M544.5,153v1.4M563.5,153v1.4M582.5,153v1.4M601.5,153v1.4M620.5,153v1.4M639.5,153v1.4M657.5,153v1.4M676.5,153v1.4M695.5,153v1.4M714.5,153v1.4M733.5,153v1.4M752.5,153v1.4M771.5,153v1.4M790.5,153v1.4M809.5,153v1.4M828.5,153v1.4M846.5,153v1.4M865.5,153v1.4M884.5,153v1.4M903.5,153v1.4M922.5,153v1.4M941.5,153v1.4M960.5,153v1.4M979.5,153v1.4M998.5,153v1.4M1017.5,153v1.4M1035.5,153v1.4M1054.5,153v1.4M1073.5,153v1.4"/>
<g font-family="Liberation Sans, sans-serif" font-size="9.9" fill="#4e5c78" text-anchor="middle"><text x="307.8" y="157">2</text><text x="345.6" y="157">1</text><text x="421.2" y="157">1</text><text x="459.0" y="157">2</text><text x="496.8" y="157">3</text><text x="534.6" y="157">4</text><text x="572.4" y="157">5</text><text x="610.2" y="157">6</text><text x="648.0" y="157">7</text><text x="685.8" y="157">8</text><text x="723.6" y="157">9</text><text x="761.4" y="157">10</text><text x="799.2" y="157">11</text><text x="837.0" y="157">12</text><text x="874.8" y="157">13</text><text x="912.6" y="157">14</text><text x="950.4" y="157">15</text><text x="988.2" y="157">16</text><text x="1063.8" y="157">18</text></g>
<path stroke="#5a6f96" stroke-width="1" d="M431.5,161v3M478.5,161v3M525.5,161v3M572.5,161v3M620.5,161v3M667.5,161v3M714.5,161v3M761.5,161v3M809.5,161v3M856.5,161v3M903.5,161v3M950.5,161v3M998.5,161v3"/>
<g fill="#e9f0fa" stroke="#4a6ca8" stroke-width="1">
<path d="M426.5,144.5h8v3l-4,4l-4,-4z"/>
<path d="M379.5,159.5v-3l4,-4l4,4v3z"/>
<rect x="379.5" y="159.5" width="8" height="6"/>
<path d="M1021.5,159.5v-3l4,-4l4,4v3z"/>
</g>
</svg>
<div class="abs" style="left:0;top:142px;width:25px;height:24px;border:1px solid #4a74c8;border-left:1px solid #5a80cc;background:#b4caec"></div>
<div class="abs" style="left:5px;top:146px;width:15px;height:15px;border:1px solid #4a74c8;background:linear-gradient(180deg,#c4d5ef,#f6f9fd)"></div>
<div class="abs" style="left:10px;top:152px;width:2px;height:6px;background:#1c2c54"></div>
<div class="abs" style="left:10px;top:156px;width:6px;height:2px;background:#1c2c54"></div>

<!-- DOC TEXT -->
<style>
.dl{position:absolute;left:383.6px;transform-origin:0 0;font-family:"Liberation Serif",serif;font-size:18.67px;line-height:21.47px;color:#000;white-space:pre;height:21.47px}
.dj{white-space:normal;text-align:justify;text-align-last:justify;width:642px}
</style>
<div class="dl" style="top:211px;transform:scaleX(1.045)">БШ =  (5*11+4*10+3*2) /(5*10+4*13+3*7) * 100% =  82,1%</div>
<div class="dl" style="top:254px;transform:scaleX(1.0505)">Жақсы орындаған оқушылардың жұмыс деңгейі</div>
<div class="dl" style="top:275px;transform:scaleX(1.0483)">(ОМИТ – оқу материалын игеру тереңдігі)</div>
<div class="dl" style="top:318px;transform:scaleX(1.0586)">ОМИТ =  41 /50 * 100% =  82%</div>

<div class="abs" id="chart" style="left:384px;top:362px;width:592px;height:220px;background:#ccffcc;border:1px solid #d9d9d9"></div>
<svg class="abs" style="left:384px;top:362px" width="592" height="220" viewBox="384 362 592 220">
 <g stroke="#fff" stroke-width="2" stroke-linejoin="round">
  <path fill="#4472c4" d="M679.60,405.30 A84,84 0 1 1 597.29,506.05 L638.15,497.73 A42.3,42.3 0 1 0 679.60,447.00 Z"/>
  <path fill="#ed7d31" d="M597.29,506.05 A84,84 0 0 1 679.60,405.30 L679.60,447.00 A42.3,42.3 0 0 0 638.15,497.73 Z"/>
 </g>
 <g fill="#fff" font-family="Liberation Serif, serif" font-size="12" text-anchor="middle">
  <g transform="translate(631.4,450.5) rotate(42)"><text x="0" y="-2.6">Орташа</text><text x="0" y="10.4">орын…</text></g>
  <g transform="translate(727.6,530.5) rotate(42)"><text x="0" y="-2.6">Жақсы</text><text x="0" y="10.4">орын…</text></g>
 </g>
</svg>
<div class="abs" style="left:385px;top:369.5px;width:592px;text-align:center;font-family:'Liberation Serif',serif;font-weight:bold;font-style:italic;font-size:27px;color:#595959;line-height:30px">ОМИТ</div>

<div class="dl" style="top:626px;left:430px;transform:scaleX(1.0445);word-spacing:-0.72px">Дайындау барысында сынақ алғандағы нәтижелері бойынша  оқушылар</div>
<div class="dl" style="top:647px;transform:scaleX(1.0445);word-spacing:-1.57px">мен мұғалімдердің  айтқаны: «Біз толық сыныппен тараулар бойынша дәрістер</div>
<div class="dl" style="top:669px;transform:scaleX(1.0445);word-spacing:2.75px">беру арқылы дайындалдық, қайталадық енді топ – топпен бөлініп қатемен</div>
<div class="dl" style="top:690px;transform:scaleX(1.0445);word-spacing:-0.64px">жұмыс істей отырып дайындалуды жүргізіп жатырмыз».</div>

<!-- SCROLLBAR -->
<div class="abs" style="left:1349px;top:139px;width:17px;height:26px;background:#a3c1ea"></div>
<div class="abs" style="left:1353px;top:144px;width:9px;height:2px;background:#3d4664"></div>
<div class="abs" style="left:1349px;top:148px;width:17px;height:17px;background:#c6cbd8;border:1px solid #aab4c8"></div>
<svg class="abs" style="left:1350px;top:149px" width="16" height="15" viewBox="0 0 16 15"><rect x="2.5" y="2.5" width="7" height="7" fill="#f3e9ee" stroke="#2f4560" stroke-width="1.2"/><rect x="5.5" y="5.5" width="8" height="7" fill="#f3e9ee" stroke="#2f4560" stroke-width="1.2"/><path d="M4,3l1.300,1.500l1.700,-2.200M8.300,11.500l1.200,-1.800l1.200,1.800" fill="none" stroke="#2f4560" stroke-width="1"/><rect x="6.500" y="6.500" width="2.500" height="2.500" fill="#fff"/></svg>
<div class="abs" style="left:1349px;top:165px;width:17px;height:489px;background:linear-gradient(90deg,#a9c5ec 0,#a9c5ec 2px,#86a6d2 3px,#7a9cca 6px,#7296c6 11px,#6f93c4 17px)"></div>
<svg class="abs" style="left:1352px;top:170px" width="12" height="8" viewBox="0 0 12 8"><path d="M1,6.3L6,1.3L11,6.3z" fill="#4e5878"/></svg>
<div class="abs" style="left:1350px;top:548px;width:15px;height:10px;border:1px solid #8d9bb5;border-radius:2px;background:linear-gradient(180deg,#f1f4f9,#d5dbe6)"></div>
<svg class="abs" style="left:1352px;top:643px" width="12" height="8" viewBox="0 0 12 8"><path d="M1,1.5L6,6.5L11,1.5z" fill="#4e5878"/></svg>
<div class="abs" style="left:1349px;top:654px;width:17px;height:53px;background:#a9c6ef"></div>
<svg class="abs" style="left:1349px;top:654px" width="17" height="53" viewBox="0 0 17 53">
<path d="M4.5,9.5L7.5,5.5L10.5,9.5zM4.5,13.5L7.5,9.5L10.5,13.5z" fill="#1e2433"/>
<circle cx="7.5" cy="25.5" r="3.6" fill="#9a9a9a" stroke="#444" stroke-width="1"/><circle cx="6.6" cy="24.5" r="1.4" fill="#e8e8e8"/>
<path d="M4.5,38.5L7.5,42.5L10.5,38.5zM4.5,42.5L7.5,46.5L10.5,42.5z" fill="#1e2433"/>
</svg>

<!-- STATUS BAR -->
<div class="abs" id="status" style="left:0;top:706px;width:1366px;height:22px;background:linear-gradient(180deg,#fff 0,#fff 1px,#dfeafa 1px,#d4e4f8 30%,#c6dbf5 48%,#b5cef0 55%,#bad4f3 80%,#c9def8 100%);border-top:1px solid #6a90c8"></div>
<style>.st{position:absolute;top:710px;font-size:11.15px;line-height:14px;color:#16245e;white-space:nowrap}.sep{position:absolute;top:709px;width:2px;height:18px;border-left:1px solid #8fb0dc;border-right:1px solid #e8f1fc}</style>
<div class="st" style="left:8.6px">Страница: 17 из 20</div>
<div class="sep" style="left:116px"></div>
<div class="st" style="left:126.3px;font-size:10.9px">Число слов: 3 628</div>
<div class="sep" style="left:226px"></div>
<svg class="abs" style="left:234px;top:708px" width="20" height="19" viewBox="0 0 20 19"><path d="M1.5,11.5L9,6l8,4l-7.5,6z" fill="#fff" stroke="#3b62a8" stroke-width="1"/><path d="M1.5,11.5v2l8,4.3l7.5,-6v-1.8" fill="#cfdcf2" stroke="#3b62a8" stroke-width="1"/><path d="M9.5,2l7,8M16.5,2l-7,8" stroke="#e8291c" stroke-width="2.2" fill="none"/></svg>
<div class="st" style="left:268.3px;font-size:10.9px">Казахский (Казахстан)</div>
<div class="sep" style="left:389px"></div>
<div class="abs" style="left:1085px;top:708px;width:281px;height:20px;background:linear-gradient(180deg,#cfe0f7 0,#bfd5f3 40%,#afc9ee 55%,#b3cdf0 80%,#c0d7f5 100%)"></div><div class="sep" style="left:1084px"></div>
<div class="abs" style="left:1090px;top:709px;width:93px;height:18px;border:1px solid #9ebbe0;border-radius:2px;background:linear-gradient(180deg,#dfeafa,#c0d6f3 50%,#b0caee 52%,#c6dbf6)"></div>
<div class="abs" style="left:1091px;top:710px;width:18px;height:16px;background:linear-gradient(180deg,#fde3a8,#fbc458 50%,#f9b132 52%,#fcd98a);border:1px solid #d9a545"></div>
<div class="abs" style="left:1109px;top:710px;width:1px;height:16px;background:#9ebbe0"></div><div class="abs" style="left:1127px;top:710px;width:1px;height:16px;background:#9ebbe0"></div><div class="abs" style="left:1146px;top:710px;width:1px;height:16px;background:#9ebbe0"></div><div class="abs" style="left:1164px;top:710px;width:1px;height:16px;background:#9ebbe0"></div>
<svg class="abs" style="left:1090px;top:709px" width="93" height="18" viewBox="0 0 93 18">
<rect x="5.5" y="3.5" width="9" height="11" fill="#fff" stroke="#555" stroke-width="1"/><path d="M7,6.5h6M7,8.5h6M7,10.5h6M7,12.5h6" stroke="#444" stroke-width="1"/>
<path d="M23,4.5c2,-1 3.500,-1 5,0.500c1.500,-1.500 3,-1.500 5,-0.500v9c-2,-1 -3.500,-1 -5,0.500c-1.500,-1.500 -3,-1.500 -5,-0.500z" fill="#fff" stroke="#444" stroke-width="1"/><path d="M28,5v9.500M24.500,7h2M24.500,9h2M24.500,11h2M29.500,7h2M29.500,9h2M29.500,11h2" stroke="#555" stroke-width=".8"/>
<rect x="41.500" y="3.500" width="9" height="9" fill="#fff" stroke="#555" stroke-width="1"/><path d="M43,6h6M43,8h6M43,10h4" stroke="#555" stroke-width="1"/><circle cx="50" cy="12" r="3.200" fill="#2f8a3c" stroke="#1e5d9a" stroke-width="1"/><circle cx="49" cy="11.200" r="1.300" fill="#4aa0e0"/>
<path d="M60,4.500h3M63,6.500h8M65,8.500h6M63,10.500h8M65,12.500h6M60,8.500h2" stroke="#444" stroke-width="1"/>
<path d="M78,4.500h11M78,6.500h11M78,8.500h11M78,10.500h11M78,12.500h11" stroke="#333" stroke-width="1"/>
</svg>
<div class="st" style="left:1190px;color:#15327a">100%</div>
<svg class="abs" style="left:1225px;top:708px" width="141" height="19" viewBox="1225 708 141 19">
<defs><linearGradient id="zb" x1="0" y1="0" x2="0" y2="1"><stop offset="0" stop-color="#f4f8fd"/><stop offset=".5" stop-color="#d4e2f5"/><stop offset="1" stop-color="#eef4fc"/></linearGradient></defs>
<path d="M1243,717.500H1346" stroke="#5f7fb2" stroke-width="1"/><path d="M1243,718.500H1346" stroke="#eaf2fc" stroke-width="1"/>
<path d="M1293.500,713v9" stroke="#5f7fb2" stroke-width="1"/>
<circle cx="1235" cy="717.500" r="7.500" fill="url(#zb)" stroke="#6a86b5" stroke-width="1"/><path d="M1230.500,717.500h9" stroke="#3f5a8c" stroke-width="2"/>
<circle cx="1353" cy="717.500" r="7.500" fill="url(#zb)" stroke="#6a86b5" stroke-width="1"/><path d="M1348.500,717.500h9M1353,713v9" stroke="#3f5a8c" stroke-width="2"/>
<path d="M1289.500,710.500h8v8l-4,4.500l-4,-4.500z" fill="url(#zb)" stroke="#5a76a8" stroke-width="1"/><path d="M1293.500,714v4" stroke="#8aa2c8" stroke-width="1"/>
</svg>

<!-- TASKBAR -->
<div class="abs" id="taskbar" style="left:0;top:728px;width:1366px;height:40px;background:linear-gradient(90deg,#231e2a 0,#201b28 6%,#1e1a28 14%,#1d1b2c 22%,#1e1d30 30%,#222238 40%,#27263c 47%,#2c2c48 52%,#333659 57%,#3a4068 65%,#3b4470 75%,#3a4572 85%,#38426d 95%,#3a4470 100%)"></div>
<svg class="abs" style="left:0;top:728px" width="1366" height="40" viewBox="0 728 1366 40"><defs><filter id="tbl" x="-30%" y="-100%" width="160%" height="300%"><feGaussianBlur stdDeviation="9 5"/></filter></defs><g filter="url(#tbl)">
<ellipse cx="545" cy="756" rx="85" ry="22" fill="#9c88a8" opacity=".75"/>
<ellipse cx="600" cy="740" rx="50" ry="10" fill="#8a7898" opacity=".6"/>
<ellipse cx="470" cy="762" rx="30" ry="10" fill="#6a5a7c" opacity=".6"/>
<ellipse cx="660" cy="752" rx="30" ry="14" fill="#6a5f80" opacity=".5"/>
<ellipse cx="440" cy="745" rx="18" ry="14" fill="#1a1828" opacity=".7"/>
<ellipse cx="60" cy="750" rx="40" ry="16" fill="#2a2434" opacity=".5"/>
<ellipse cx="112" cy="762" rx="22" ry="8" fill="#4a4258" opacity=".55"/>
</g></svg>
<div class="abs" style="left:0;top:728px;width:1366px;height:40px;background:linear-gradient(180deg,rgba(0,0,0,.6) 0,rgba(0,0,0,.6) 1px,rgba(255,255,255,.42) 1px,rgba(255,255,255,.38) 2px,rgba(255,255,255,.05) 3px,rgba(255,255,255,.03) 45%,rgba(0,0,0,.06) 100%)"></div>
<svg class="abs" style="left:0;top:728px" width="1366" height="40" viewBox="0 728 1366 40">
<defs>
<radialGradient id="orb" cx=".5" cy=".85" r=".9"><stop offset="0" stop-color="#39c0f5"/><stop offset=".35" stop-color="#1f7fc8"/><stop offset=".7" stop-color="#1c4f8f"/><stop offset="1" stop-color="#173a6e"/></radialGradient>
<linearGradient id="orbhi" x1="0" y1="0" x2="0" y2="1"><stop offset="0" stop-color="#fff" stop-opacity=".75"/><stop offset="1" stop-color="#fff" stop-opacity=".08"/></linearGradient>
<linearGradient id="btnA" x1="0" y1="0" x2="1" y2="1"><stop offset="0" stop-color="#c9c9d2"/><stop offset=".45" stop-color="#8f8f9c"/><stop offset="1" stop-color="#75757f"/></linearGradient>
<linearGradient id="btnB" x1="0" y1="0" x2="1" y2="1"><stop offset="0" stop-color="#5b5a6a"/><stop offset=".5" stop-color="#34334a"/><stop offset="1" stop-color="#2a293d"/></linearGradient>
<linearGradient id="fold" x1="0" y1="0" x2="0" y2="1"><stop offset="0" stop-color="#fbeeb0"/><stop offset="1" stop-color="#e9c96a"/></linearGradient>
<linearGradient id="opr" x1="0" y1="0" x2="1" y2="1"><stop offset="0" stop-color="#ff2a3c"/><stop offset="1" stop-color="#b80e1f"/></linearGradient>
</defs>
<!-- start orb -->
<circle cx="27.200" cy="748.200" r="18.500" fill="#0c1c38" opacity=".85"/>
<circle cx="27.200" cy="748.200" r="17.500" fill="url(#orb)" stroke="#9cc0dc" stroke-opacity=".7" stroke-width="1"/>
<path d="M10.200,747a17,17 0 0 1 34,0q-8,-4.500 -17,-1.500t-17,1.500z" fill="url(#orbhi)" opacity=".7"/>
<g transform="translate(28,747.600) scale(1.180)">
<path d="M-9.500,-6.500q4,-2.500 8,-0.500l-1.600,6.500q-4,-2 -8,0.500z" fill="#f0542a"/>
<path d="M0,-6.500q4,2 8.500,-0.500l-1.600,6.500q-4.500,2.500 -8.500,0.500z" fill="#8ec63f"/>
<path d="M-11.500,1.300q4,-2.500 8,-0.500l-1.600,6.500q-4,-2 -8,0.500z" fill="#3b9be8"/>
<path d="M-2,1.300q4,2 8.500,-0.500l-1.600,6.500q-4.500,2.500 -8.500,0.500z" fill="#fbc12d"/>
</g>
<!-- WMP -->
<path d="M79,737.500h20l2.500,1.500v22.500l-2.500,-1h-20z" fill="#9fd0ee" stroke="#5d9fd0" stroke-width="1"/>
<rect x="75.500" y="737.500" width="21" height="24" fill="#6db4e0" stroke="#4a90c8" stroke-width="1"/>
<circle cx="86" cy="749.500" r="8.300" fill="#f57f17" stroke="#d9620a" stroke-width=".8"/>
<path d="M82.800,744.500v10l8.500,-5z" fill="#fff"/>
<!-- Word button -->
<rect x="177.500" y="729.500" width="3" height="38" rx="1.500" fill="#6e6e7a" stroke="#b4b4c0" stroke-width="1"/>
<rect x="122.500" y="729.500" width="53" height="39" rx="3" fill="url(#btnA)" stroke="#e4e4ee" stroke-width="1"/>
<path d="M133.500,760.500V738q0,-5.500 6,-5.500h18.500v6" fill="#dfe9f8" stroke="#3a66b8" stroke-width="1.300"/>
<path d="M134,760l2.500,0.600V738.500q-2.500,0 -2.500,2z" fill="#5a86d0"/>
<path d="M140.500,737.500l22,-2.500l1,25l-21,2.500z" fill="#f6f8fd" stroke="#a8bcdc" stroke-width=".8"/>
<text x="144.500" y="746.500" font-family="Liberation Sans, sans-serif" font-size="9.500" font-weight="bold" font-style="italic" fill="#1f4aa3">W</text>
<path d="M155.500,739.500h5M155.500,742h5M155.500,744.500h5M144,748.800l17,-1.500M144,751.800l17,-1.500M144,754.800l17,-1.500M144,757.800l13,-1.200" stroke="#2a56a8" stroke-width="1.400"/>
<!-- Chrome button -->
<rect x="184.500" y="729.500" width="57" height="39" rx="3" fill="url(#btnB)" stroke="#9b9aaa" stroke-width="1"/>
<circle cx="213" cy="747.400" r="16" fill="#e33b2e"/>
<path d="M213,747.400L199.140,739.400A16,16 0 0 0 213,763.400z" fill="#2da14b"/>
<path d="M213,747.400L213,763.400A16,16 0 0 0 226.860,739.400z" fill="#fbc116"/>
<path d="M213,747.400L226.860,739.400A16,16 0 0 0 199.140,739.400z" fill="#e33b2e"/>
<path d="M213,739.400h13.860l-6.930,12z" fill="#fbc116"/><path d="M206.070,751.400l-6.930,-12l6.930,0z" fill="#2da14b"/>
<circle cx="213" cy="747.400" r="8" fill="#fff"/><circle cx="213" cy="747.400" r="6.300" fill="#2f7de1"/>
<circle cx="221" cy="756.300" r="7.500" fill="#5f63c4"/>
<text x="221" y="759.800" text-anchor="middle" font-family="Liberation Sans, sans-serif" font-size="9.500" fill="#fff">S</text>
<!-- Opera -->
<ellipse cx="275.100" cy="747.400" rx="15" ry="15" fill="url(#opr)"/>
<ellipse cx="275.300" cy="747.400" rx="7.500" ry="12" fill="#1d1c2e"/>
<!-- Explorer button -->
<rect x="308.500" y="729.500" width="57" height="39" rx="3" fill="url(#btnB)" stroke="#9b9aaa" stroke-width="1"/>
<path d="M321.500,762.500v-25.500l2,-2h11l2,2.500h14l2,2v23z" fill="url(#fold)" stroke="#caa446" stroke-width="1"/>
<rect x="324" y="735.800" width="3" height="2" fill="#25b04a"/><rect x="331" y="737.800" width="3" height="2" fill="#d93025"/><rect x="339.500" y="739.800" width="3" height="2" fill="#2a8de0"/>
<path d="M327.500,763.500v-9.500q0,-3 3,-3h15q3,0 3,3v9.500h-5.500v-7h-10v7z" fill="#8fd3f2" stroke="#3a9bd0" stroke-width="1"/>
<path d="M328,751l3,-6M326,753.500l8,-2" stroke="#fff" stroke-width=".8" opacity=".9"/>
<!-- address -->
<text x="729" y="752.500" font-family="Liberation Sans, sans-serif" font-size="11.600" fill="#fff">Адрес</text>
<rect x="767" y="737" width="228" height="22" rx="2" fill="#fff" stroke="#7a86b0" stroke-width="1"/>
<path d="M969.500,737.500v21" stroke="#8a93b0" stroke-width="1"/>
<path d="M957,746.500h7.400l-3.700,4z" fill="#000"/>
<path d="M977,750l3,-6.500l2,3.300l2.200,-1.300l-3.700,6.300l-1.700,-3z" fill="#1c74d8"/><path d="M983,752.500l2.500,-6l3.500,4.500l-2.200,0.200l-0.800,4l-2,-0.800l0.800,-2.400z" fill="#1c74d8"/>
<text x="1006.500" y="750" font-family="Liberation Sans, sans-serif" font-size="11.200" fill="#fff">КК</text>
<!-- clock -->
<text x="1312.700" y="745" text-anchor="middle" font-family="Liberation Sans, sans-serif" font-size="11" fill="#fff">1:31</text>
<text x="1312.500" y="761.500" text-anchor="middle" font-family="Liberation Sans, sans-serif" font-size="10.700" fill="#fff">20.01.2025</text>
<rect x="1352.500" y="729.500" width="14" height="39" fill="#5a6590" fill-opacity=".6" stroke="#9aa5c8" stroke-opacity=".7" stroke-width="1"/>
<rect x="1353.500" y="730.500" width="6" height="37" fill="#fff" fill-opacity=".1"/>
</svg>
<!-- TRAY -->
<svg class="abs" style="left:1030px;top:735px" width="245" height="28" viewBox="1030 735 245 28">
<!-- usb -->
<rect x="1037.500" y="741" width="8" height="3.500" fill="#cfcfcf" stroke="#777" stroke-width=".6"/><path d="M1036.500,744.500h10v9q0,3 -3,3h-4q-3,0 -3,-3z" fill="#8d8d8d" stroke="#555" stroke-width=".8"/>
<circle cx="1047.500" cy="754" r="4.300" fill="#22a43a" stroke="#fff" stroke-width=".8"/><path d="M1045.400,754l1.500,1.700l2.800,-3.200" fill="none" stroke="#fff" stroke-width="1.300"/>
<!-- pin -->
<circle cx="1068.500" cy="746" r="5" fill="#2a8fe8"/><circle cx="1068.500" cy="746" r="2" fill="#14457f"/><path d="M1068.500,750v8" stroke="#2a8fe8" stroke-width="2.200"/>
<!-- wifi lock -->
<path d="M1085.500,744.500q6.500,-6 13,0M1087.500,747q4.500,-4 9,0M1089.500,749.300q2.500,-2.200 5,0" fill="none" stroke="#fff" stroke-width="1.400"/>
<rect x="1086.500" y="751" width="11" height="8" rx="1" fill="#fff"/><path d="M1089,752v-2q3,-3 6,0v2" fill="none" stroke="#fff" stroke-width="1.600"/><rect x="1088" y="754.800" width="2" height="2" fill="#222"/><rect x="1091" y="754.800" width="2" height="2" fill="#222"/><rect x="1094" y="754.800" width="2" height="2" fill="#222"/>
<!-- red hex -->
<path d="M1112,741.500h8l4,7.500l-4,7.500h-8l-4,-7.500z" fill="#f0325a" stroke="#f0325a" stroke-width="1.500" stroke-linejoin="round"/><path d="M1116,744v6.500M1116,752.500v2" stroke="#4a0d1e" stroke-width="2"/>
<!-- signal -->
<path d="M1133.500,756v-2M1136.500,756v-3.500M1139.500,756v-6M1142.500,756v-9M1145.500,756v-12" stroke="#fff" stroke-width="2"/>
<!-- nvidia -->
<path d="M1156,749q4,-6 15,-6v12q-9,1 -15,-6z" fill="#76b900"/><path d="M1159,749q3,-3.500 8,-3.500q-2,3 0,7q-5,0 -8,-3.500z" fill="none" stroke="#3a4570" stroke-width="1.100"/><circle cx="1163.500" cy="749" r="1.500" fill="#3a4570"/>
<!-- volume -->
<path d="M1180,746.500h3l4.500,-4.500v15l-4.500,-4.500h-3z" fill="#fff" stroke="#ccc" stroke-width=".5"/><path d="M1190,746q2,3 0,6.500M1192.500,743.500q3.500,5.500 0,11.500" fill="none" stroke="#fff" stroke-width="1.300"/>
<!-- power -->
<rect x="1203.500" y="743.500" width="8" height="14" rx="1" fill="none" stroke="#ddd" stroke-width="1.200"/><path d="M1210,745h6v5q0,2.500 -3,2.500t-3,-2.500zM1211.500,741.500v3.500M1214.500,741.500v3.500M1213,752.500v5" fill="#fff" stroke="#fff" stroke-width="1.200"/>
<path d="M1203.500,751l7,7.500M1210.500,751l-7,7.500" stroke="#e8161b" stroke-width="2"/>
<!-- flag -->
<path d="M1229.500,742v16" stroke="#fff" stroke-width="1.600"/><path d="M1230.500,742.500h7l1,1.500h4.500v7h-6l-1,-1.500h-5.500z" fill="#fff"/>
<circle cx="1240.500" cy="755" r="4.500" fill="#e03131" stroke="#fff" stroke-width=".6"/><path d="M1238.700,753.200l3.600,3.600M1242.300,753.200l-3.600,3.600" stroke="#fff" stroke-width="1.400"/>
<!-- bluetooth -->
<ellipse cx="1260" cy="749.500" rx="5.500" ry="8" fill="#0b3f86"/><path d="M1256.800,746l6.200,6.500l-3,3v-12l3,3l-6.200,6.500" fill="none" stroke="#fff" stroke-width="1.300"/>
</svg>

</div></body></html>
